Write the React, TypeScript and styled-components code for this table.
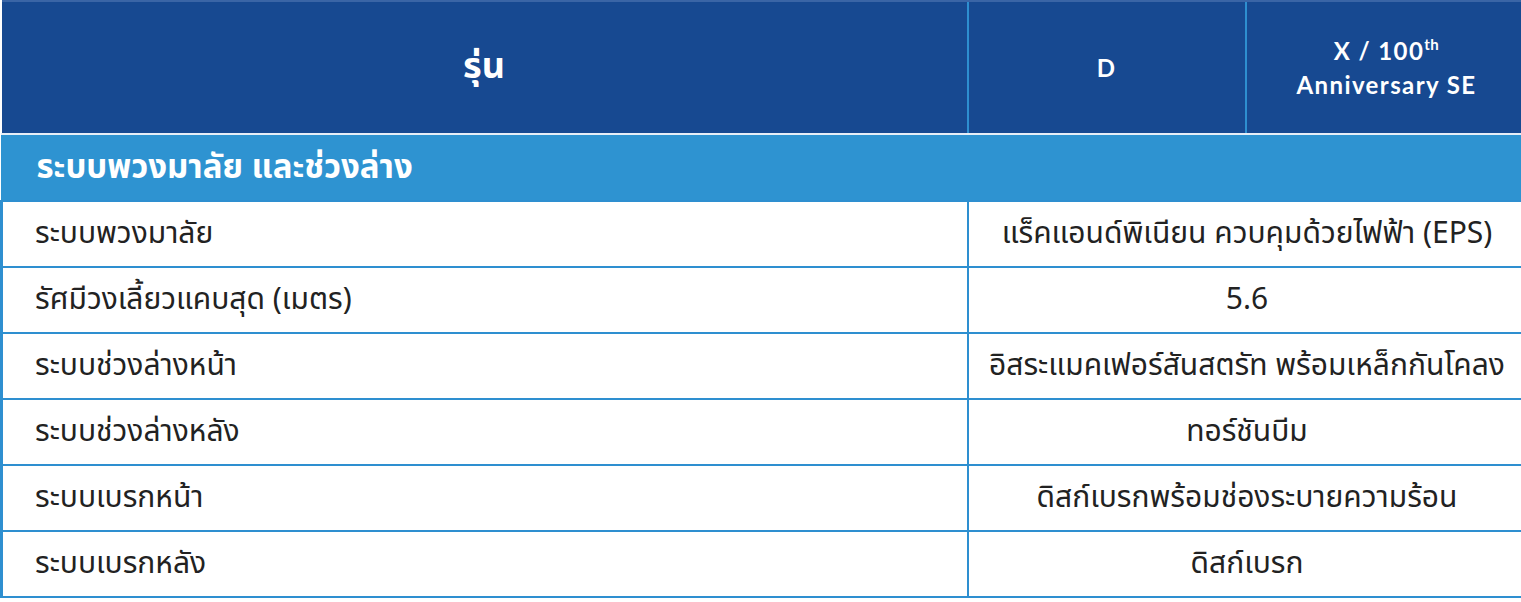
import React from "react";
import styled, { createGlobalStyle } from "styled-components";

const Global = createGlobalStyle`
  html, body { margin: 0; padding: 0; background: #ffffff; }
  body { font-family: "Noto Sans Thai", "Noto Sans", "Open Sans", sans-serif; }
`;

const Table = styled.table`
  width: 1521px;
  border-collapse: collapse;
  table-layout: fixed;
`;

const HeadCell = styled.th<{ $w: number; $first?: boolean }>`
  width: ${(p) => p.$w}px;
  height: 131px;
  background: #174991;
  color: #ffffff;
  text-align: center;
  vertical-align: middle;
  padding: 0;
  border-top: 2px solid #3a65a6;
  border-left: ${(p) => (p.$first ? "none" : "2px solid #2e8fd0")};
  border-bottom: 2px solid #e6eef7;
  font-family: "Lato", "Noto Sans Thai", "Noto Sans", sans-serif;
  font-weight: 700;
  font-size: 24px;
  line-height: 34px;
  letter-spacing: 1.4px;
`;

const ModelTitle = styled.span`
  font-size: 36px;
  letter-spacing: 0;
  font-family: "Noto Sans Thai", "Noto Sans", sans-serif;
`;

const Sup = styled.sup`
  font-size: 15px;
  letter-spacing: 0.5px;
  vertical-align: 10px;
  line-height: 0;
`;

const SectionCell = styled.td`
  height: 65px;
  background: #2e93d1;
  color: #ffffff;
  padding: 0 0 0 34px;
  font-weight: 700;
  font-size: 33px;
  border-left: 2px solid #2e93d1;
  border-right: 2px solid #2e93d1;
  text-align: left;
  vertical-align: middle;
`;

const Row = styled.tr`
  height: 66px;
`;

const LabelCell = styled.td`
  padding: 0 0 0 32px;
  border: 2px solid #2e8fd0;
  border-left-width: 3px;
  color: #222222;
  font-size: 30px;
  text-align: left;
  vertical-align: middle;
`;

const ValueCell = styled.td`
  padding: 0 10px;
  border: 2px solid #2e8fd0;
  border-right-color: #d6e6f3;
  color: #222222;
  font-size: 30px;
  text-align: center;
  vertical-align: middle;
  white-space: nowrap;
`;

const rows: [string, string][] = [
  ["ระบบพวงมาลัย", "แร็คแอนด์พิเนียน ควบคุมด้วยไฟฟ้า (EPS)"],
  ["รัศมีวงเลี้ยวแคบสุด (เมตร)", "5.6"],
  ["ระบบช่วงล่างหน้า", "อิสระแมคเฟอร์สันสตรัท พร้อมเหล็กกันโคลง"],
  ["ระบบช่วงล่างหลัง", "ทอร์ชันบีม"],
  ["ระบบเบรกหน้า", "ดิสก์เบรกพร้อมช่องระบายความร้อน"],
  ["ระบบเบรกหลัง", "ดิสก์เบรก"],
];

export default function App() {
  return (
    <>
      <Global />
      <Table>
        <thead>
          <tr>
            <HeadCell $w={965} $first>
              <ModelTitle>รุ่น</ModelTitle>
            </HeadCell>
            <HeadCell $w={276}>D</HeadCell>
            <HeadCell $w={280}>
              X / 100<Sup>th</Sup>
              <br />
              Anniversary SE
            </HeadCell>
          </tr>
        </thead>
        <tbody>
          <tr>
            <SectionCell colSpan={3}>ระบบพวงมาลัย และช่วงล่าง</SectionCell>
          </tr>
          {rows.map(([label, value]) => (
            <Row key={label}>
              <LabelCell>{label}</LabelCell>
              <ValueCell colSpan={2}>{value}</ValueCell>
            </Row>
          ))}
        </tbody>
      </Table>
    </>
  );
}
